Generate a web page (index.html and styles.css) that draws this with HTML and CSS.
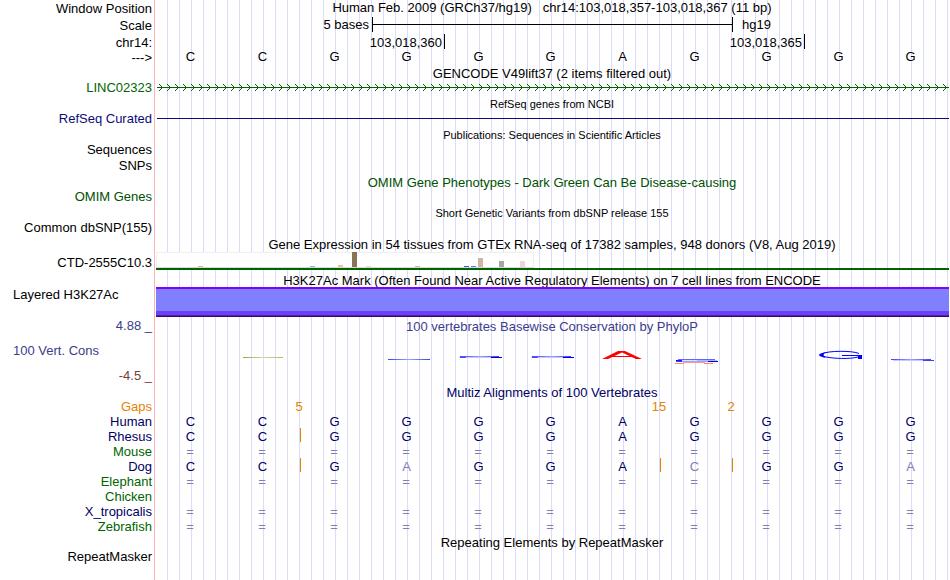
FILE: index.html
```
<!DOCTYPE html>
<html lang="en">
<head>
<meta charset="utf-8">
<title>Human chr14:103,018,357-103,018,367</title>
<link rel="stylesheet" href="styles.css">
</head>
<body>
<main class="browser">
  <div class="row tall">
    <div class="label low">Window Position</div>
    <h1 class="title">Human Feb. 2009 (GRCh37/hg19) &nbsp; chr14:103,018,357-103,018,367 (11 bp)</h1>
  </div>
  <div class="row tall">
    <div class="label low">Scale</div>
    <div class="ruler">
      <span class="ruler-start">5 bases</span>
      <span class="ruler-bar"></span>
      <span class="ruler-end">hg19</span>
    </div>
  </div>
  <div class="row short">
    <div class="label low">chr14:</div>
    <div class="ruler">
      <span class="tick tick-a">103,018,360</span>
      <span class="tick tick-b">103,018,365</span>
    </div>
  </div>
  <div class="row tall">
    <div class="label low">---&gt;</div>
    <div class="bases"><span>C</span><span>C</span><span>G</span><span>G</span><span>G</span><span>G</span><span>A</span><span>G</span><span>G</span><span>G</span><span>G</span></div>
  </div>

  <h2 class="title heading">GENCODE V49lift37 (2 items filtered out)</h2>
  <div class="row item">
    <div class="label green">LINC02323</div>
    <div class="plot">
      <svg class="gene" aria-hidden="true">
        <defs>
          <pattern id="arrows" width="8" height="15" patternUnits="userSpaceOnUse">
            <path d="M2 4h1v1h-1zM3 5h1v1h-1zM4 6h1v1h-1zM5 7h1v1h-1zM4 8h1v1h-1zM3 9h1v1h-1zM2 10h1v1h-1z" fill="#006400"/>
          </pattern>
        </defs>
        <rect width="100%" height="15" fill="url(#arrows)"/>
        <rect y="7" width="100%" height="1" fill="#006400"/>
      </svg>
    </div>
  </div>

  <h2 class="title small">RefSeq genes from NCBI</h2>
  <div class="row item">
    <div class="label navy">RefSeq Curated</div>
    <div class="plot"><div class="refseq"></div></div>
  </div>

  <h2 class="title small">Publications: Sequences in Scientific Articles</h2>
  <div class="row item"><div class="label">Sequences</div></div>
  <div class="row tall"><div class="label">SNPs</div></div>

  <h2 class="title heading omim">OMIM Gene Phenotypes - Dark Green Can Be Disease-causing</h2>
  <div class="row item"><div class="label omim">OMIM Genes</div></div>

  <h2 class="title small">Short Genetic Variants from dbSNP release 155</h2>
  <div class="row tall"><div class="label">Common dbSNP(155)</div></div>

  <h2 class="title">Gene Expression in 54 tissues from GTEx RNA-seq of 17382 samples, 948 donors (V8, Aug 2019)</h2>
  <div class="row gtex">
    <div class="label">CTD-2555C10.3</div>
    <div class="plot expression">
      <svg class="tissues" width="378" height="16" shape-rendering="crispEdges" aria-hidden="true">
        <rect width="378" height="16" fill="#f0f0f0"/>
        <rect x="1" y="1" width="376" height="14" fill="#ffffff"/>
        <rect y="15" width="378" height="1" fill="#d8d8d8"/>
        <rect x="42" y="14" width="5" height="1" fill="#cdb79e"/>
        <rect x="154" y="14" width="5" height="1" fill="#7ac5cd"/>
        <rect x="182" y="13" width="5" height="2" fill="#eec591"/>
        <rect x="196" y="0" width="5" height="15" fill="#8b7355"/>
        <rect x="210" y="14" width="5" height="1" fill="#eed5d2"/>
        <rect x="259" y="14" width="5" height="1" fill="#cdb79e"/>
        <rect x="308" y="14" width="5" height="1" fill="#3a5fcd"/>
        <rect x="315" y="14" width="5" height="1" fill="#1e90ff"/>
        <rect x="322" y="6" width="5" height="9" fill="#cdb79e"/>
        <rect x="343" y="9" width="5" height="6" fill="#a6a6a6"/>
        <rect x="364" y="9" width="5" height="6" fill="#eed5d2"/>
      </svg>
    </div>
  </div>

  <h2 class="title heading">H3K27Ac Mark (Often Found Near Active Regulatory Elements) on 7 cell lines from ENCODE</h2>
  <div class="row mark">
    <div class="label left">Layered H3K27Ac</div>
    <div class="plot"><div class="signal"></div></div>
  </div>

  <div class="row cons">
    <div class="scale">
      <div class="label max">4.88 _</div>
      <div class="label left name">100 Vert. Cons</div>
      <div class="label min">-4.5 _</div>
    </div>
    <div class="track">
      <h2 class="title slate">100 vertebrates Basewise Conservation by PhyloP</h2>
      <svg class="logo" width="792" height="16" aria-hidden="true">
        <defs>
          <linearGradient id="fadeOlive"><stop offset="0" stop-color="#a0a030"/><stop offset=".5" stop-color="#d8d8b0"/><stop offset="1" stop-color="#b4b460"/></linearGradient>
          <linearGradient id="fadeBlue"><stop offset="0" stop-color="#4040ff"/><stop offset=".5" stop-color="#a0a0ff"/><stop offset="1" stop-color="#4040e8"/></linearGradient>
        </defs>
        <rect x="88" y="7" width="40" height="1" fill="url(#fadeOlive)"/>
        <rect x="233" y="9" width="42" height="1" fill="url(#fadeBlue)"/>
        <g id="flat">
          <rect x="305" y="6" width="39" height="1" fill="url(#fadeBlue)"/>
          <rect x="304" y="7" width="42" height="1" fill="#c8c8ff"/>
          <rect x="305" y="7" width="6" height="1" fill="#5050ff"/>
          <rect x="336" y="7" width="11" height="1" fill="#0000e0"/>
        </g>
        <use href="#flat" x="72"/>
        <path d="M457 6.500H477" fill="none" stroke="#ff0000" stroke-width="1"/>
        <path d="M447 9L463 1H470L487 9H481L467 2.500L453 9Z" fill="#ff0000"/>
        <rect x="523" y="9" width="37" height="1" fill="#6464ff"/>
        <rect x="521" y="10" width="6" height="1" fill="#1414ff"/>
        <rect x="527" y="10" width="15" height="1" fill="#e4e4ff"/>
        <rect x="542" y="10" width="20" height="1" fill="#b4b4ff"/>
        <rect x="521" y="11" width="6" height="1" fill="#3c3cff"/>
        <rect x="527" y="11" width="26" height="1" fill="#a0a0ff"/>
        <rect x="553" y="11" width="10" height="1" fill="#0000f0"/>
        <rect x="528" y="12" width="22" height="1" fill="#ff9696"/>
        <rect x="520" y="13" width="9" height="1" fill="#ff8282"/>
        <rect x="549" y="13" width="9" height="1" fill="#ff8282"/>
        <path d="M704 3.500C698 .500 672 .500 667 4C663 8 693 10 703 7" fill="none" stroke="#0000ff" stroke-width="1"/>
        <path d="M671 2Q657 5 671 8Q666 5 671 2Z" fill="#0000ff"/>
        <path d="M687 5.500H707M703 6.500H707M703 7.500H707M703 8.500H707" stroke="#0000ff" stroke-width="1"/>
        <rect x="736" y="9" width="40" height="1" fill="url(#fadeBlue)"/>
        <rect x="738" y="10" width="30" height="1" fill="#c8c8ff"/>
        <rect x="768" y="10" width="11" height="1" fill="#4040f0"/>
      </svg>
    </div>
  </div>

  <h2 class="title heading align-name">Multiz Alignments of 100 Vertebrates</h2>
  <table class="alignment">
    <tr class="gaps"><th scope="row">Gaps</th><td></td><td></td><td><span class="count">5</span></td><td></td><td></td><td></td><td></td><td><span class="count">15</span></td><td><span class="count">2</span></td><td></td><td></td></tr>
    <tr><th scope="row">Human</th><td>C</td><td>C</td><td>G</td><td>G</td><td>G</td><td>G</td><td>A</td><td>G</td><td>G</td><td>G</td><td>G</td></tr>
    <tr><th scope="row">Rhesus</th><td>C</td><td>C</td><td class="gap">G</td><td>G</td><td>G</td><td>G</td><td>A</td><td>G</td><td>G</td><td>G</td><td>G</td></tr>
    <tr class="missing"><th scope="row">Mouse</th><td>=</td><td>=</td><td>=</td><td>=</td><td>=</td><td>=</td><td>=</td><td>=</td><td>=</td><td>=</td><td>=</td></tr>
    <tr><th scope="row">Dog</th><td>C</td><td>C</td><td class="gap">G</td><td class="differs">A</td><td>G</td><td>G</td><td>A</td><td class="gap differs">C</td><td class="gap">G</td><td>G</td><td class="differs">A</td></tr>
    <tr class="missing"><th scope="row">Elephant</th><td>=</td><td>=</td><td>=</td><td>=</td><td>=</td><td>=</td><td>=</td><td>=</td><td>=</td><td>=</td><td>=</td></tr>
    <tr class="missing"><th scope="row">Chicken</th><td></td><td></td><td></td><td></td><td></td><td></td><td></td><td></td><td></td><td></td><td></td></tr>
    <tr class="missing"><th scope="row" class="frog">X_tropicalis</th><td>=</td><td>=</td><td>=</td><td>=</td><td>=</td><td>=</td><td>=</td><td>=</td><td>=</td><td>=</td><td>=</td></tr>
    <tr class="missing"><th scope="row">Zebrafish</th><td>=</td><td>=</td><td>=</td><td>=</td><td>=</td><td>=</td><td>=</td><td>=</td><td>=</td><td>=</td><td>=</td></tr>
  </table>

  <h2 class="title heading repeats">Repeating Elements by RepeatMasker</h2>
  <div class="row item"><div class="label">RepeatMasker</div></div>
</main>
</body>
</html>
```
FILE: styles.css
```
* { box-sizing: border-box; }

body {
  margin: 0;
  background: #ffffff;
  color: #000000;
  font: 13px/15px "Liberation Sans", Arial, sans-serif;
}

/* Pink divider after the labels, then one guide every 12px. */
.browser {
  min-height: 100vh;
  padding-right: 1px;
  background-image:
    linear-gradient(#ffb4b4, #ffb4b4),
    repeating-linear-gradient(to right, transparent 0 11px, #dcdcfa 11px 12px);
  background-repeat: no-repeat;
  background-position: 154px 0, 156px 0;
  background-size: 1px 100%, calc(100% - 156px) 100%;
}

.row {
  display: grid;
  grid-template-columns: 155px minmax(0, 1fr);
  align-items: start;
}
.tall { height: 17px; }
.item { height: 16px; }
.short { height: 15px; }

.label {
  padding-right: 3px;
  text-align: right;
  white-space: nowrap;
}
.low { line-height: 17px; }
.left { padding-left: 13px; text-align: left; }

.title {
  margin: 0;
  font-size: 13px;
  font-weight: normal;
  line-height: 15px;
  text-align: center;
  white-space: nowrap;
}
h2.title { padding-left: 155px; }
.heading { height: 14px; }
.title.small { height: 15px; font-size: 11px; line-height: 17px; }

.green { color: #006400; }
.navy { color: #0c0c78; }
.omim { color: #005000; }
.slate { color: #3c3c8c; }
.align-name { color: #000064; }

.ruler, .bases {
  display: grid;
  grid-template-columns: repeat(11, minmax(0, 1fr));
  margin-right: 2px;
}
.ruler { margin-left: 1px; margin-right: 1px; }
.bases { text-align: center; }
.bases span { padding-right: 1px; }
.ruler-start { grid-column: 1 / 4; padding-right: 3px; text-align: right; }
.ruler-bar {
  grid-column: 4 / 9;
  border-left: 1px solid #000000;
  background: linear-gradient(#000000, #000000) 0 7px / 100% 1px no-repeat;
}
.ruler-end { grid-column: 9 / 12; border-left: 1px solid #000000; padding-left: 9px; }
.tick {
  height: 15px;
  padding-right: 2px;
  border-right: 1px solid #000000;
  margin-right: -1px;
  line-height: 17px;
  text-align: right;
}
.tick-a { grid-column: 1 / 5; }
.tick-b { grid-column: 5 / 10; }

.plot { padding-left: 1px; }
.gene { display: block; width: calc(100% - 1px); height: 15px; margin-left: 1px; }
.refseq { height: 1px; margin: 7px 0 0 1px; background: #0c0c78; }

.gtex { height: 21px; }
.gtex .label { padding-top: 3px; }
.expression { background: linear-gradient(#006400, #006400) 1px 16px / 100% 2px no-repeat; height: 18px; }
.tissues { display: block; }

.mark { height: 32px; }
.signal {
  height: 30px;
  background: linear-gradient(#8000ff 0 2px, #8080ff 2px 24px, #6a40ff 24px 28px, #5a20a0 28px 29px, #300c60 29px);
}

.cons { height: 66px; }
.max { height: 24px; line-height: 13px; color: #3c3c8c; }
.name { height: 25px; color: #3c3c8c; }
.min { color: #783c3c; }
.track .title { padding-left: 0; }
.logo { display: block; margin-top: 16px; }

.alignment {
  width: calc(100% - 2px);
  table-layout: fixed;
  border-collapse: collapse;
  color: #000064;
}
.alignment tr { height: 15px; }
.alignment th, .alignment td { padding: 0; font-weight: normal; text-align: center; }
.alignment th { width: 155px; padding-right: 3px; text-align: right; }
.alignment td { position: relative; padding-right: 1px; }
.alignment .missing td { padding-right: 2px; }
.gaps { color: #e68200; }
.count { position: absolute; top: 0; left: 0; transform: translateX(-50%); }
.gap::before {
  content: "";
  position: absolute;
  top: -1px;
  left: 1px;
  width: 1px;
  height: 14px;
  background: #e68200;
}
.missing th { color: #006400; }
.missing .frog { color: #000064; }
.missing td, .differs { color: #8080b4; }

.repeats { margin-top: 1px; }
```
